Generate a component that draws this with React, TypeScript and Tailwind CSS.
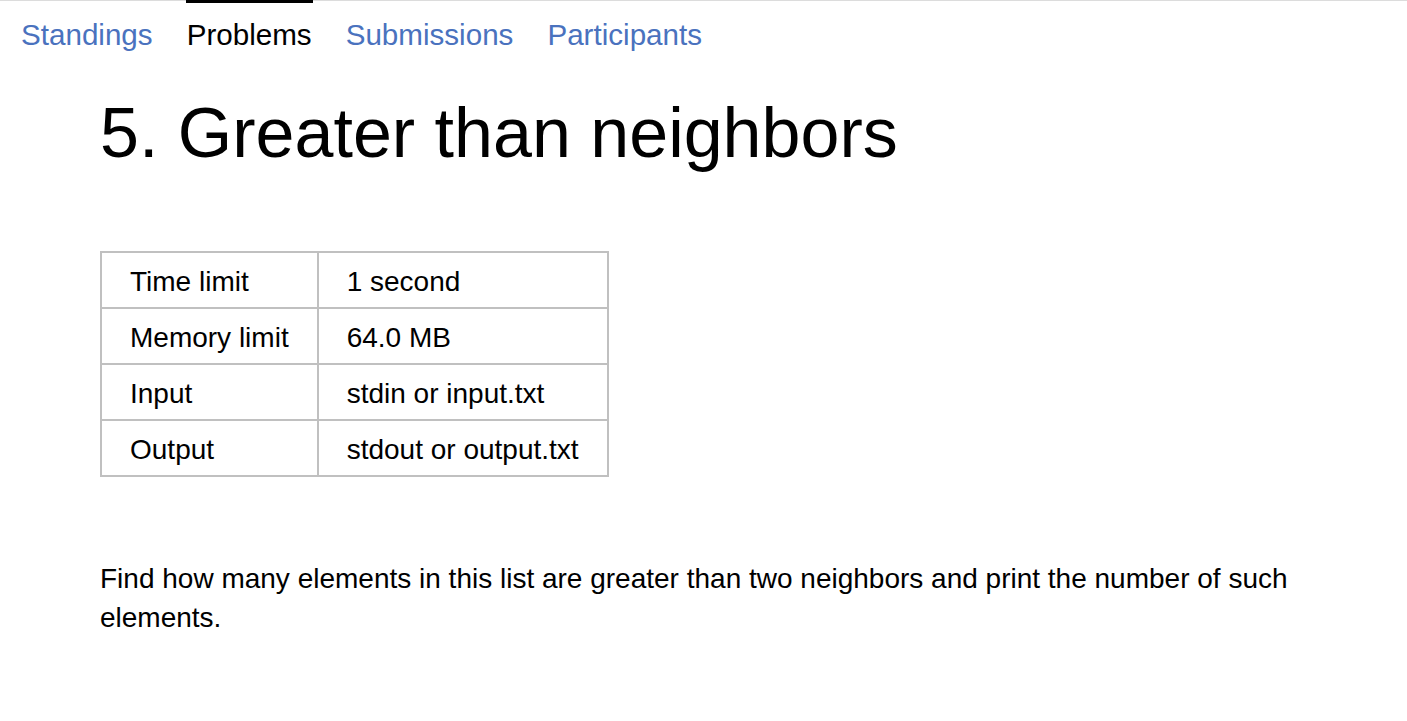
import React from "react";

const rows: [string, string][] = [
  ["Time limit", "1 second"],
  ["Memory limit", "64.0 MB"],
  ["Input", "stdin or input.txt"],
  ["Output", "stdout or output.txt"],
];

export default function App() {
  return (
    <div
      className="min-h-[721px] bg-white text-black"
      style={{ fontFamily: '"Liberation Sans", Arial, Helvetica, sans-serif' }}
    >
      <div className="border-t border-[#dcdcdc]">
        <nav className="flex gap-[34px] pl-[21px] pt-[17px] text-[29.6px] leading-[34px]">
          <a className="text-[#4a72be]">Standings</a>
          <span className="relative text-black">
            <span className="absolute left-[-1px] right-[-1px] top-[-18px] h-[3px] bg-black" />
            Problems
          </span>
          <a className="text-[#4a72be]">Submissions</a>
          <a className="text-[#4a72be]">Participants</a>
        </nav>
      </div>
      <main className="pl-[100px] pr-[100px]">
        <h1 className="mt-[41px] text-[70px] leading-[80px] font-normal">5. Greater than neighbors</h1>
        <table className="mt-[78px] border-collapse text-[28px] leading-[32px]">
          <tbody>
            {rows.map(([k, v]) => (
              <tr key={k}>
                <td className="border-2 border-[#c0c0c0] px-[28px] pt-[13px] pb-[9px]">{k}</td>
                <td className="border-2 border-[#c0c0c0] px-[28px] pt-[13px] pb-[9px]">{v}</td>
              </tr>
            ))}
          </tbody>
        </table>
        <p className="mt-[82px] text-[28px] leading-[39px]">
          Find how many elements in this list are greater than two neighbors and print the number of such elements.
        </p>
      </main>
    </div>
  );
}
